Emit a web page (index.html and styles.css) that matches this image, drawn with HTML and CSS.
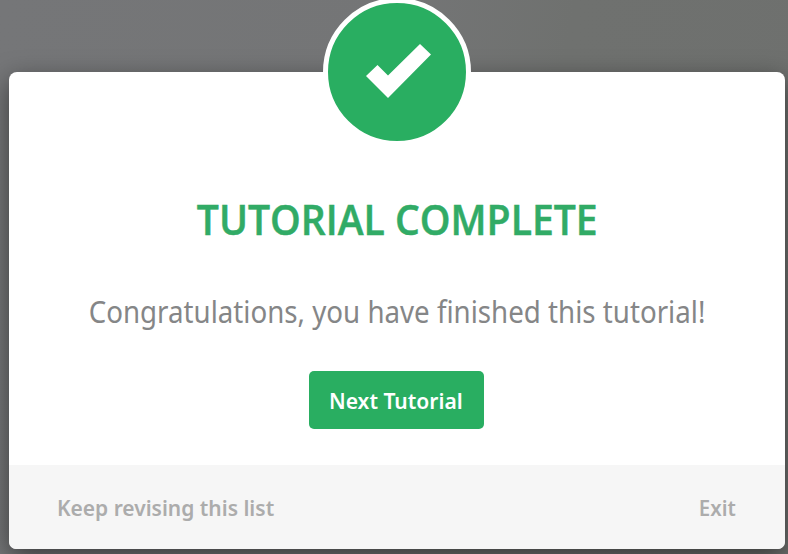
FILE: index.html
```html
<!DOCTYPE html>
<html lang="en">
<head>
<meta charset="utf-8">
<title>Tutorial Complete</title>
<link rel="stylesheet" href="styles.css">
</head>
<body>
<main class="modal">
  <div class="badge">
    <svg class="check" viewBox="0 0 66 54" aria-hidden="true"><path d="M0 32 11.5 21 22 31.5 54 0 65 10.5 22 54Z"/></svg>
  </div>
  <section class="content">
    <h1 class="title"><span>TUTORIAL COMPLETE</span></h1>
    <p class="message"><span>Congratulations, you have finished this tutorial!</span></p>
    <button class="next"><span>Next Tutorial</span></button>
  </section>
  <footer class="footer">
    <a class="keep">Keep revising this list</a>
    <a class="exit">Exit</a>
  </footer>
</main>
</body>
</html>
```
FILE: styles.css
```css
* { box-sizing: border-box; }
body {
  margin: 0;
  height: 554px;
  padding: 72px 3px 5px 9px;
  overflow: hidden;
  background: linear-gradient(100deg, #757678 0%, #747576 45%, #6f716f 65%, #6e706e 100%);
  font-family: "Noto Sans", "Open Sans", sans-serif;
}
.modal {
  position: relative;
  display: flex;
  flex-direction: column;
  height: 477px;
  border-radius: 8px;
  background: #fff;
  box-shadow: 0 8px 26px rgba(0, 0, 0, 0.5);
}
.badge {
  position: absolute;
  top: -74px;
  left: 314px;
  display: flex;
  align-items: center;
  justify-content: center;
  width: 148px;
  height: 148px;
  border: 5px solid #fff;
  border-radius: 50%;
  background: #29ae61;
}
.check { width: 66px; height: 54px; margin: -2px 0 0 4px; fill: #fff; }
.content {
  display: flex;
  flex: 1;
  flex-direction: column;
  align-items: center;
  padding-top: 117px;
}
.title, .message { margin: 0; white-space: nowrap; }
.title span, .message span, .next span { display: inline-block; }
.title {
  height: 60px;
  line-height: 60px;
  font-family: "Open Sans", sans-serif;
  font-size: 42px;
  font-weight: 600;
  color: #31ab66;
  -webkit-text-stroke: 0.5px #31ab66;
}
.title span { transform: scaleX(0.931); }
.message { height: 50px; margin-top: 38px; line-height: 50px; font-size: 30px; color: #858687; }
.message span { transform: scaleX(0.923); }
.next {
  position: relative;
  left: -1px;
  width: 175px;
  height: 58px;
  margin-top: 34px;
  padding: 0;
  border: 0;
  border-radius: 5px;
  background: #29ae61;
  color: #fff;
  font: 600 22px/58px "Noto Sans", sans-serif;
  white-space: nowrap;
}
.next span { transform: scaleX(0.957); }
.footer {
  display: flex;
  align-items: center;
  justify-content: space-between;
  height: 84px;
  padding: 0 49px 0 48px;
  border-radius: 0 0 7px 7px;
  background: #f6f6f6;
  color: #acacac;
  font-size: 22px;
  font-weight: 600;
}
.keep { transform: scaleX(0.953); transform-origin: left; }
.exit { transform: scaleX(0.93); transform-origin: right; }
```
